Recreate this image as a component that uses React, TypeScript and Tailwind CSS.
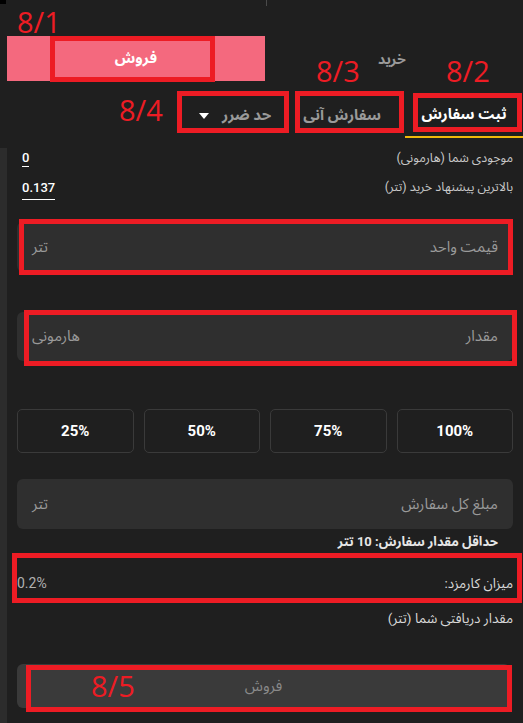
import React from "react";

const fa = { fontFamily: 'Roboto, "Noto Sans Arabic", "DejaVu Sans", sans-serif' };
const lbl = { fontFamily: '"Open Sans", "Liberation Sans", sans-serif' };

function Box({ className }: { className: string }) {
  return <div className={"absolute border-[5px] border-[#ed1c24] " + className} />;
}

function Label({ className, text }: { className: string; text: string }) {
  return (
    <div className={"absolute text-[29px] leading-[30px] text-[#ed1c24] " + className} style={lbl}>
      {text}
    </div>
  );
}

export default function App() {
  return (
    <div className="relative w-[523px] h-[723px] overflow-hidden bg-[#1f1f1f] text-white" style={fa}>
      {/* top strip */}
      <div className="h-[36px] flex">
        <div className="w-[6px] h-[4px] bg-black" />
        <div className="ml-[260px] w-px h-[6px] bg-[#4a4a4a]" />
      </div>

      {/* sell / buy row */}
      <div className="h-[45px] flex">
        <div className="ml-[7px] w-[258px] h-[45px] bg-[#f4697e] flex items-center justify-center">
          <span dir="rtl" className="text-[15px] font-bold text-white">فروش</span>
        </div>
        <div className="pl-[113px] pt-[15px]">
          <span dir="rtl" className="text-[14px] leading-[16px] font-bold text-[#9a9a9a] block">خرید</span>
        </div>
      </div>

      {/* tabs */}
      <div className="mt-[12px] h-[45px] flex items-stretch">
        <div className="ml-[199px] flex items-center gap-[13px]">
          <svg width="10" height="6" viewBox="0 0 10 6"><polygon points="0,0 10,0 5,6" fill="#fff" /></svg>
          <span dir="rtl" className="text-[15px] font-bold text-[#9a9a9a]">حد ضرر</span>
        </div>
        <div className="ml-[32px] flex items-center">
          <span dir="rtl" className="text-[15px] font-bold text-[#9a9a9a]">سفارش آنی</span>
        </div>
        <div className="ml-auto w-[118px] flex items-center justify-center border-b-2 border-[#f0b90b]">
          <span dir="rtl" className="text-[15px] font-bold text-white">ثبت سفارش</span>
        </div>
      </div>

      {/* body */}
      <div className="mt-[10px] flex h-[575px]">
        <div className="w-[7px] bg-[#2c2c2c]" />
        <div className="flex-1 flex flex-col px-[10px]">
          <div className="h-[22px] flex justify-between items-start">
            <span className="ml-[5px] mt-[2px] text-[13px] leading-[15px] font-medium pb-[1px] border-b-[1.5px] border-white">0</span>
            <span dir="rtl" className="text-[12.5px] leading-[20px] text-[#c8c8c8]">موجودی شما (هارمونی)</span>
          </div>
          <div className="mt-[7px] h-[23px] flex justify-between items-start">
            <span className="ml-[5px] mt-[3px] text-[13px] leading-[15px] font-medium pb-[4px] border-b-[1.5px] border-white">0.137</span>
            <span dir="rtl" className="text-[12.5px] leading-[20px] text-[#c8c8c8]">بالاترین پیشنهاد خرید (تتر)</span>
          </div>

          <div className="mt-[22px] h-[50px] rounded-[6px] bg-[#2f2f2f] flex items-center justify-between px-[15px]">
            <span dir="rtl" className="text-[15px] text-[#9a9a9a]">تتر</span>
            <span dir="rtl" className="text-[15px] text-[#9a9a9a]">قیمت واحد</span>
          </div>

          <div className="mt-[40px] h-[49px] rounded-[6px] bg-[#2f2f2f] flex items-center justify-between px-[15px]">
            <span dir="rtl" className="text-[15px] text-[#9a9a9a]">هارمونی</span>
            <span dir="rtl" className="text-[15px] text-[#9a9a9a]">مقدار</span>
          </div>

          <div className="mt-[48px] h-[44px] grid grid-cols-4 gap-[10px]">
            {["25%", "50%", "75%", "100%"].map((p) => (
              <div key={p} className="rounded-[5px] border border-[#3a3a3a] flex items-center justify-center text-[15px] font-bold text-white">
                {p}
              </div>
            ))}
          </div>

          <div className="mt-[26px] h-[50px] rounded-[6px] bg-[#2f2f2f] flex items-center justify-between px-[15px]">
            <span dir="rtl" className="text-[15px] text-[#9a9a9a]">تتر</span>
            <span dir="rtl" className="text-[15px] text-[#9a9a9a]">مبلغ کل سفارش</span>
          </div>

          <div className="mt-[3px] h-[20px] flex items-center justify-end pr-[15px]">
            <span dir="rtl" className="text-[13px] font-bold text-[#e6e6e6]">حداقل مقدار سفارش: 10 تتر</span>
          </div>

          <div className="mt-[21px] h-[20px] flex items-center justify-between">
            <span className="text-[14px] text-[#b0b0b0]">0.2%</span>
            <span dir="rtl" className="text-[13.5px] text-[#d8d8d8]">میزان کارمزد:</span>
          </div>

          <div className="mt-[15px] h-[20px] flex items-center justify-end">
            <span dir="rtl" className="text-[13.5px] text-[#d8d8d8]">مقدار دریافتی شما (تتر)</span>
          </div>

          <div className="mt-[36px] mr-[3px] h-[44px] rounded-[6px] bg-[#3a3a3a] flex items-center justify-center">
            <span dir="rtl" className="text-[15px] text-[#8a8a8a]">فروش</span>
          </div>
        </div>
      </div>

      {/* annotations */}
      <Box className="left-[50px] top-[36px] w-[165px] h-[46px]" />
      <Label className="left-[17px] top-[7px]" text="8/1" />
      <Box className="left-[413px] top-[93px] w-[109px] h-[39px]" />
      <Label className="left-[446px] top-[56px]" text="8/2" />
      <Box className="left-[295px] top-[91px] w-[109px] h-[42px]" />
      <Label className="left-[316px] top-[56px]" text="8/3" />
      <Box className="left-[177px] top-[91px] w-[112px] h-[42px]" />
      <Label className="left-[119px] top-[95px]" text="8/4" />
      <Box className="left-[19px] top-[219px] w-[494px] h-[56px]" />
      <Box className="left-[24px] top-[310px] w-[493px] h-[56px]" />
      <Box className="left-[12px] top-[553px] w-[510px] h-[50px]" />
      <Box className="left-[26px] top-[665px] w-[486px] h-[47px]" />
      <Label className="left-[91px] top-[671px]" text="8/5" />
    </div>
  );
}
